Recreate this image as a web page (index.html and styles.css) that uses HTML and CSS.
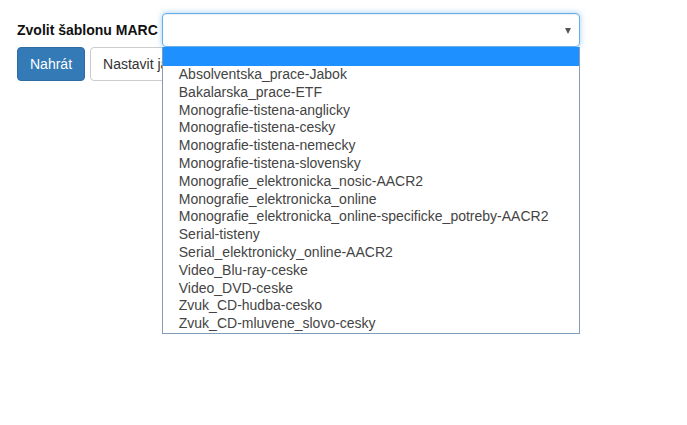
FILE: index.html
```html
<!DOCTYPE html>
<html lang="cs">
  <head>
    <meta charset="utf-8">
    <title>Šablona MARC</title>
    <link rel="stylesheet" href="styles.css">
  </head>
  <body>
    <div class="page">
      <div class="row">
        <label class="lbl">Zvolit šablonu MARC</label>
        <div class="select-wrap">
          <div class="select"><span class="caret"></span></div>
          <ul class="options">
            <li class="active">&nbsp;</li>
            <li>Absolventska_prace-Jabok</li>
            <li>Bakalarska_prace-ETF</li>
            <li>Monografie-tistena-anglicky</li>
            <li>Monografie-tistena-cesky</li>
            <li>Monografie-tistena-nemecky</li>
            <li>Monografie-tistena-slovensky</li>
            <li>Monografie_elektronicka_nosic-AACR2</li>
            <li>Monografie_elektronicka_online</li>
            <li>Monografie_elektronicka_online-specificke_potreby-AACR2</li>
            <li>Serial-tisteny</li>
            <li>Serial_elektronicky_online-AACR2</li>
            <li>Video_Blu-ray-ceske</li>
            <li>Video_DVD-ceske</li>
            <li>Zvuk_CD-hudba-cesko</li>
            <li>Zvuk_CD-mluvene_slovo-cesky</li>
          </ul>
        </div>
      </div>
      <div class="actions">
        <button class="btn btn-primary">Nahrát</button>
        <button class="btn btn-default">Nastavit jako výchozí</button>
      </div>
    </div>
  </body>
</html>
```

FILE: styles.css
```css
html,
body {
  height: 100%;
}

body {
  margin: 0;
  font-family: "Liberation Sans", Arial, sans-serif;
  font-size: 14px;
  color: #333;
  background: #fff;
}

.page {
  padding: 13px 17px;
}

.row {
  display: flex;
  align-items: center;
  height: 34px;
}

.lbl {
  font-weight: bold;
  color: #111;
  margin-right: 4px;
}

.select-wrap {
  position: relative;
}

.select {
  width: 418px;
  height: 34px;
  box-sizing: border-box;
  border: 1px solid #66afe9;
  border-radius: 4px;
  box-shadow: inset 0 1px 1px rgba(0, 0, 0, 0.075), 0 0 6px rgba(102, 175, 233, 0.6);
  display: flex;
  align-items: center;
  justify-content: flex-end;
  padding-right: 8px;
}

.caret {
  width: 0;
  height: 0;
  border-left: 3.5px solid transparent;
  border-right: 3.5px solid transparent;
  border-top: 6px solid #555;
  margin-top: 1px;
}

.options {
  position: absolute;
  top: 34px;
  left: 0;
  width: 418px;
  box-sizing: border-box;
  margin: 0;
  padding: 0;
  list-style: none;
  background: #fff;
  border: 1px solid #7f9db9;
  border-top: none;
  font-size: 14px;
  color: #444;
}

.options li {
  height: 17.8px;
  line-height: 17.8px;
  padding-left: 16px;
  white-space: nowrap;
}

.options li.active {
  background: #1e90ff;
  height: 19px;
}

.actions {
  display: flex;
  gap: 5px;
}

.btn {
  font-family: inherit;
  font-size: 14px;
  height: 34px;
  padding: 6px 12px;
  border-radius: 4px;
  border: 1px solid #ccc;
  cursor: pointer;
}

.btn-primary {
  background: #337ab7;
  border-color: #2e6da4;
  color: #fff;
}

.btn-default {
  background: #fff;
  color: #333;
}
```
